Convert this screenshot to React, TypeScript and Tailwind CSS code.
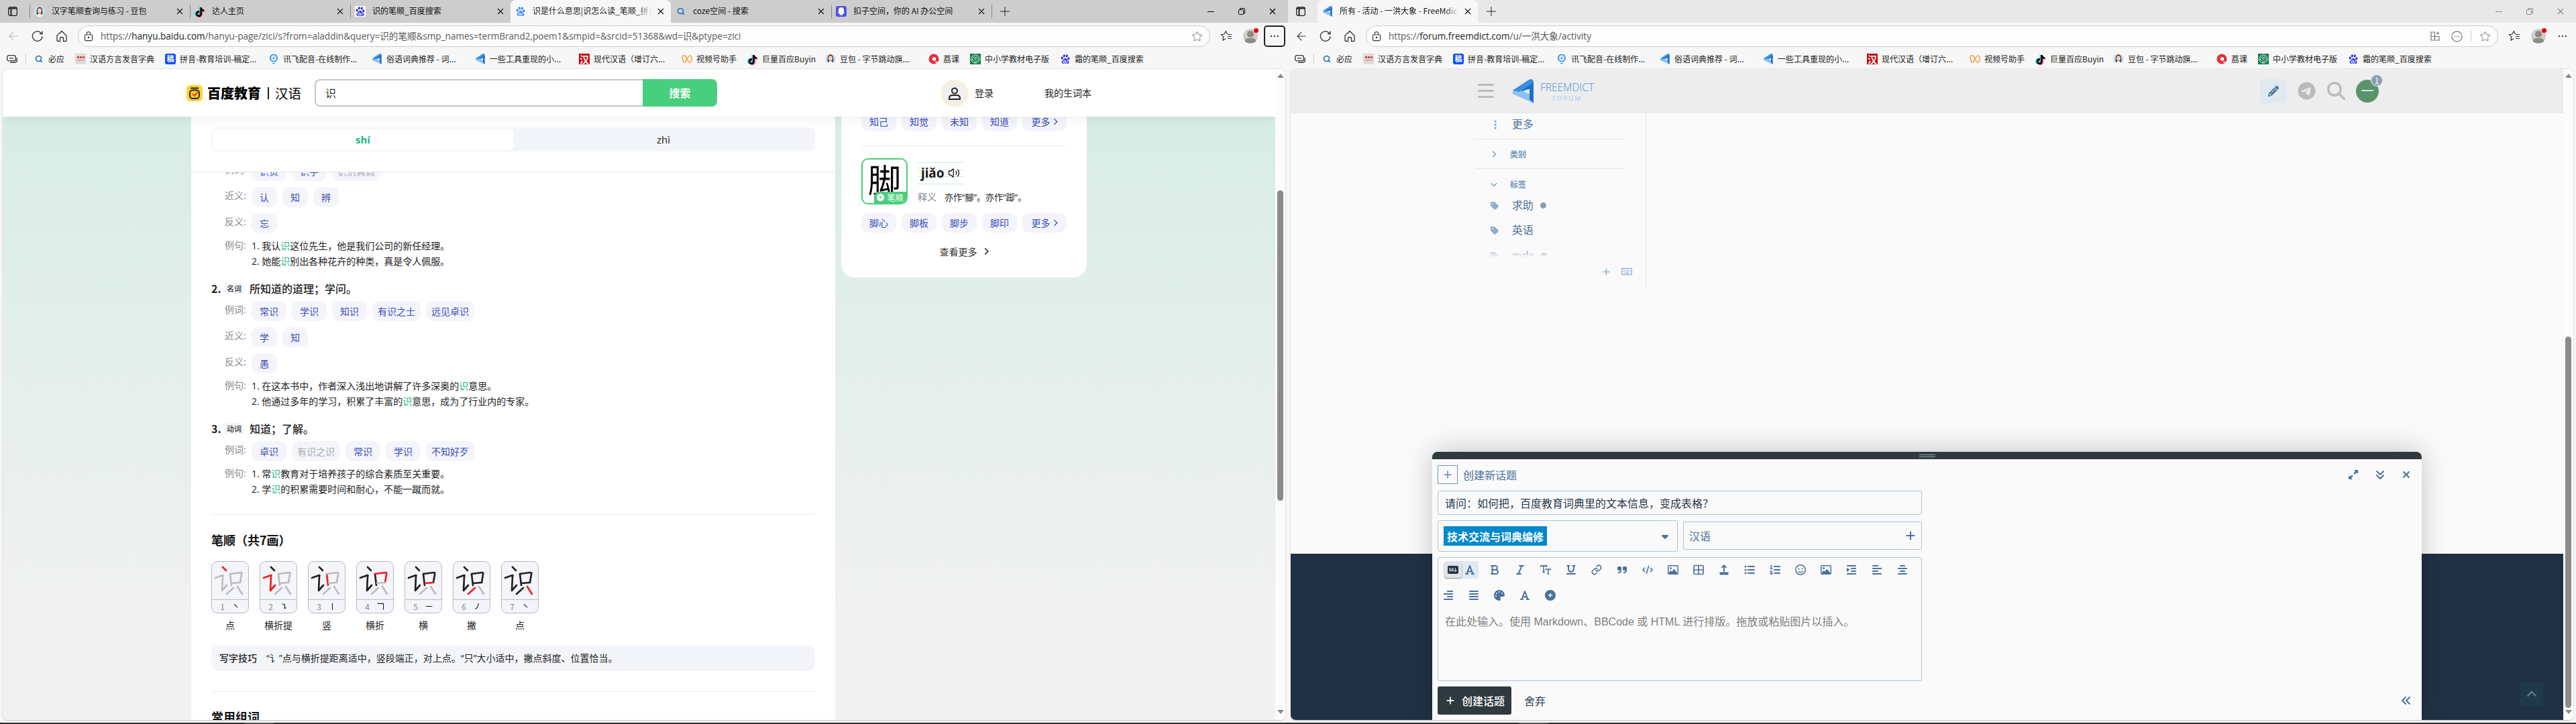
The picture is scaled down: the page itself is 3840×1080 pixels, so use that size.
import type { ReactNode } from 'react';
import {
  FaAlignCenter, FaAlignJustify, FaAlignLeft, FaAlignRight, FaAnglesDown, FaAnglesLeft, FaBold, FaCaretDown,
  FaChevronDown, FaChevronRight, FaCirclePlus, FaCode, FaEllipsisVertical, FaFont, FaIndent, FaItalic,
  FaListOl, FaListUl, FaMagnifyingGlass, FaPalette, FaPencil, FaPlus, FaQuoteRight, FaRegFaceSmile, FaRegImage,
  FaRegKeyboard, FaTag, FaTelegram, FaTiktok, FaUnderline,
  FaUpRightAndDownLeftFromCenter, FaXmark, FaChevronUp,
} from 'react-icons/fa6';
import { BsMarkdownFill } from 'react-icons/bs';
import { SiBaidu } from 'react-icons/si';
import { ArrowLeft, Link, Search, Star, Volume2 } from 'lucide-react';

/* ---------- small icons ---------- */

const Avatar = () => (
  <svg viewBox="0 0 16 16" className="size-4 shrink-0">
    <circle cx="8" cy="8" r="8" fill="#c5e4f7" />
    <path d="M4 13C3 6 4 1.500 8 1.500S13 6 12 13z" fill="#5a3a36" />
    <ellipse cx="8" cy="7" rx="2.900" ry="3.700" fill="#f8d3c3" />
    <path d="M4 15C4.500 12 6.500 11 8 11s3.500 1 4 4q-4 2-8 0z" fill="#fff" />
  </svg>
);

const Tiktok = () => (
  <span className="relative size-4 shrink-0">
    <FaTiktok className="absolute top-0.5 -left-px size-3.5 text-[#25d6e0]" />
    <FaTiktok className="absolute top-[3px] left-[2px] size-3.5 text-[#f0305a]" />
    <FaTiktok className="absolute top-0.5 left-px size-3.5 text-black" />
  </span>
);

const Paw = ({ light = false }: { light?: boolean }) => (
  <span className="flex size-4 shrink-0 items-center justify-center bg-white">
    <SiBaidu className={light ? 'size-3.5 text-[#3385ff]' : 'size-3.5 text-[#2a32d8]'} />
  </span>
);

const BlueSearch = () => <Search className="size-3 shrink-0 text-[#1a73c4]" strokeWidth={3.4} />;

const MdictMark = ({ className = 'h-4 w-4' }: { className?: string }) => (
  <svg viewBox="0 0 32 36" className={`shrink-0 ${className}`}>
    <path d="M0 17L26 0Q31 0 31 4V14L10 18z" fill="#3a8ee6" />
    <path d="M0 17L31 35V25L14 17z" fill="#8fc0f3" />
    <path d="M31 4V36L25 32V14L15 18 9 14z" fill="#1e6fc8" />
    <path d="M0 17L24 1 29 1 31 5 10 19z" fill="#3a8ee6" />
    <path d="M0 17v5L31 36l-6-6z" fill="#8fc0f3" />
  </svg>
);

const VoiceBook = () => (
  <span className="flex size-4 shrink-0 flex-col items-center justify-center gap-0.5 bg-[#dcdcdc]">
    <span className="flex gap-px">
      <i className="size-[3px] bg-[#d44]" />
      <i className="size-[3px] bg-[#d44]" />
      <i className="size-[3px] bg-[#d44]" />
    </span>
    <span className="h-0.5 w-3 bg-[#e9a5a5]" />
  </span>
);

const Gaoding = () => (
  <span className="flex size-4 shrink-0 items-center justify-center rounded-[3px] bg-[#0a4dff] text-[11px] leading-none font-bold text-white">稿</span>
);

const Xunfei = () => (
  <svg viewBox="0 0 16 16" className="size-4 shrink-0" fill="none">
    <circle cx="8" cy="6.500" r="5" stroke="#3f9bf5" strokeWidth="2.200" />
    <path d="M6 14.500h4M9 4.500 7 7h2.500" stroke="#3f9bf5" strokeWidth="1.500" />
  </svg>
);

const Han = () => (
  <span className="flex size-4 shrink-0 items-center justify-center bg-[#c4040a] text-[14px] leading-none font-bold text-white">汉</span>
);

const Channels = () => (
  <svg viewBox="0 0 16 16" className="size-4 shrink-0" fill="none" stroke="#f5a142" strokeWidth="1.500">
    <path d="M8 8C6 2 1 1 1.200 5S3 15 5 13s5-11 8-10 2 9 0 10-3-2-5-5z" />
  </svg>
);

const RedDot = () => (
  <svg viewBox="0 0 16 16" className="size-4 shrink-0">
    <circle cx="8" cy="8" r="7.500" fill="#e0303a" />
    <circle cx="8.500" cy="8" r="2.800" fill="#fff" />
    <path d="M10 12.500c2 0 4 0 4 2.500" stroke="#fff" strokeWidth="1.500" fill="none" />
  </svg>
);

const GreenBook = () => (
  <svg viewBox="0 0 16 16" className="size-4 shrink-0" fill="none" stroke="#fff">
    <rect width="16" height="16" fill="#0c7a4c" stroke="none" />
    <circle cx="8" cy="8" r="6.200" />
    <path d="M4 5l4 4 4-4M3 8l5 5 5-5M6 4l2 2 2-2" />
  </svg>
);

const CozeIcon = () => (
  <svg viewBox="0 0 16 16" className="size-4 shrink-0">
    <rect width="16" height="16" rx="3" fill="#4d53e8" />
    <path d="M8 2a4 4 0 014 4v3l1 1.500-2 .5-1 2.500H6L5 11l-2-.5L4 9V6a4 4 0 014-4z" fill="#fff" />
  </svg>
);

const Cross = ({ className = 'size-2.5' }: { className?: string }) => (
  <svg viewBox="0 0 10 10" className={`shrink-0 ${className}`} stroke="currentColor" strokeWidth="1.100">
    <path d="M1 1l8 8M9 1l-8 8" />
  </svg>
);

/* ---------- browser chrome ---------- */

interface Tab {
  title: string;
  icon: ReactNode;
  active?: boolean;
  separator?: boolean;
}

const bookmarks = [
  { label: '必应', icon: <BlueSearch />, width: 'w-[62px]' },
  { label: '汉语方言发音字典', icon: <VoiceBook />, width: 'w-[134px]' },
  { label: '拼音-教育培训-稿定...', icon: <Gaoding />, width: 'w-[154px]' },
  { label: '讯飞配音-在线制作...', icon: <Xunfei />, width: 'w-[154px]' },
  { label: '俗语词典推荐 - 词...', icon: <MdictMark />, width: 'w-[154px]' },
  { label: '一些工具重现的小...', icon: <MdictMark />, width: 'w-[155px]' },
  { label: '现代汉语（增订六...', icon: <Han />, width: 'w-[153px]' },
  { label: '视频号助手', icon: <Channels />, width: 'w-[98px]' },
  { label: '巨量百应Buyin', icon: <Tiktok />, width: 'w-[116px]' },
  { label: '豆包 - 字节跳动旗...', icon: <Avatar />, width: 'w-[154px]' },
  { label: '荔课', icon: <RedDot />, width: 'w-[62px]' },
  { label: '中小学教材电子版', icon: <GreenBook />, width: 'w-[134px]' },
  { label: '霜的笔顺_百度搜索', icon: <Paw />, width: 'w-[134px]' },
];

const TabStrip = ({ tabs, focused }: { tabs: Tab[]; focused: boolean }) => (
  <div className={`flex h-[34px] shrink-0 ${focused ? 'bg-[#cdcdcd]' : 'bg-[#e8e8e8]'}`}>
    <div className="flex w-11 items-center justify-center pr-1">
      <svg viewBox="0 0 14 14" className="mr-0.5 size-3.5" fill="none" stroke="#222" strokeWidth="1.300">
        <rect x="0.700" y="0.700" width="12.600" height="12.600" rx="2.500" />
        <path d="M1 2.500h12M4.500 3v10" strokeWidth="2" />
      </svg>
    </div>
    {tabs.map((tab) => (
      <div
        key={tab.title}
        className={`flex w-[239px] shrink-0 items-center pr-2.5 text-[12px] text-[#111] ${tab.active ? 'rounded-t-lg bg-[#f7f7f7]' : ''}`}
      >
        <span className={`h-5 w-px ${tab.separator ? 'bg-[#888]' : ''}`} />
        <span className="ml-[6px] flex w-4 justify-center">{tab.icon}</span>
        <span className={`ml-2.5 w-[178px] overflow-hidden pb-0.5 whitespace-nowrap ${tab.active ? 'mask-r-from-88% mask-r-to-100%' : ''}`}>{tab.title}</span>
        <span className="ml-2">
          <Cross />
        </span>
      </div>
    ))}
    <div className="flex items-center">
      <span className={`h-5 w-px ${focused ? 'bg-[#888]' : ''}`} />
      <svg viewBox="0 0 14 14" className="ml-3 size-3.5" stroke="#222">
        <path d="M7 0v14M0 7h14" />
      </svg>
    </div>
    <div className={`ml-auto flex items-center gap-9 pr-[18px] ${focused ? 'text-black' : 'text-[#888]'}`}>
      <span className="h-px w-2.5 bg-current" />
      <svg viewBox="0 0 10 10" className="size-2.5" fill="none" stroke="currentColor">
        <path d="M2.500 2V.5H8Q9.500.5 9.500 2v6H8" />
        <rect x="0.500" y="2.500" width="7" height="7" rx="1" />
      </svg>
      <Cross />
    </div>
  </div>
);

const Toolbar = ({ url, focused }: { url: ReactNode; focused: boolean }) => (
  <div className="flex h-10 shrink-0 items-center text-[#333]">
    <ArrowLeft className={`ml-2.5 size-[20px] ${focused ? 'text-[#b5b5b5]' : ''}`} strokeWidth={1.3} />
    <svg viewBox="0 0 18 18" className="ml-[17px] size-[18px]" fill="none" stroke="currentColor" strokeWidth="1.300">
      <path d="M16 9a7.300 7.300 0 11-2.500-5.500L16 5.500M16 1.500v4h-4" />
    </svg>
    <svg viewBox="0 0 18 18" className="ml-[18px] size-[18px]" fill="none" stroke="currentColor" strokeWidth="1.300">
      <path d="M2 8l7-6.500L16 8v7.500Q16 16.500 15 16.500h-3.500v-5Q11.500 10.500 9 10.500t-2.500 1v5H3Q2 16.500 2 15.500z" />
    </svg>
    <div className="ml-[15px] flex h-8 w-[1688px] items-center rounded-full border border-[#ccc] bg-[#fdfdfd] pr-[10px] pl-2">
      <svg viewBox="0 0 14 16" className="h-[15px] w-3.5" fill="none" stroke="currentColor" strokeWidth="1.200">
        <rect x="1" y="5" width="12" height="9.500" rx="2" />
        <path d="M4 5V3.500a3 3 0 016 0V5" />
        <circle cx="7" cy="9.500" r="0.800" fill="currentColor" />
      </svg>
      <span className="ml-[11px] font-['Open_Sans','Noto_Sans_CJK_SC',sans-serif] text-[13.55px] whitespace-nowrap text-[#5a5a5a]">{url}</span>
      <div className="ml-auto flex items-center text-[#777]">
        {!focused && (
          <>
            <svg viewBox="0 0 16 16" className="size-4" fill="none" stroke="currentColor" strokeWidth="1.200">
              <path d="M7.500 2H2v12h12V8.500H2M7.500 2v12M12 1v5M9.500 3.500h5" />
            </svg>
            <svg viewBox="0 0 16 16" className="ml-4 size-[17px]" fill="none" stroke="currentColor" strokeWidth="1.100">
              <circle cx="8" cy="8" r="7.200" />
              <path d="M4.500 8h1.200M7.400 8h1.200M10.300 8h1.200" strokeWidth="1.500" />
            </svg>
            <span className="mr-3 ml-3 h-4 w-px bg-[#ccc]" />
          </>
        )}
        <Star className="size-[17px]" strokeWidth={1.4} />
      </div>
    </div>
    <svg viewBox="0 0 18 18" className="ml-[15px] size-[18px]" fill="none" stroke="currentColor" strokeWidth="1.200">
      <path d="M10.500 6L8.200 1.500 6 6l-4.500.7 3.300 3.200L4 15l4-2.300M11 6.500h6M11 9.500h6M11 12.500h6" />
    </svg>
    <span className="relative ml-4 flex size-[22px] items-center justify-center rounded-full bg-[#d0cec8]">
      <svg viewBox="0 0 22 22" className="size-[22px]" fill="#8d8983">
        <circle cx="11" cy="8" r="5" />
        <path d="M3 19q0-5 5-5h6q5 0 5 5-8 5-16 0z" />
      </svg>
      <span className="absolute -top-px -right-px size-[7px] rounded-full bg-[#e60012]" />
    </span>
    <span
      className={`ml-[9px] flex h-8 w-8 items-center justify-center gap-[3px] rounded-[5px] ${focused ? 'border-2 border-[#222]' : ''}`}
    >
      <i className="size-0.5 bg-[#333]" />
      <i className="size-0.5 bg-[#333]" />
      <i className="size-0.5 bg-[#333]" />
    </span>
  </div>
);

const Bookmarks = () => (
  <div className="flex h-[29px] shrink-0 items-center pb-0.5 text-[12px] text-[#222]">
    <svg viewBox="0 0 16 12" className="ml-2.5 h-3 w-4" fill="none" stroke="#333" strokeWidth="1.300">
      <rect x="0.700" y="0.700" width="12.500" height="8" rx="2.500" />
      <path d="M4 4.700h6M15.200 4v4q0 3-3 3H5" />
    </svg>
    <span className="ml-3 h-4 w-px bg-[#ccc]" />
    <div className="ml-[11px] flex">
      {bookmarks.map((b) => (
        <div key={b.label} className={`flex shrink-0 items-center whitespace-nowrap ${b.width}`}>
          <span className="flex w-4 shrink-0 justify-center">{b.icon}</span>
          <span className="ml-1.5">{b.label}</span>
        </div>
      ))}
    </div>
  </div>
);

interface BrowserWindowProps {
  tabs: Tab[];
  url: ReactNode;
  focused?: boolean;
  scroll: ReactNode;
  children: ReactNode;
}

const BrowserWindow = ({ tabs, url, focused = false, scroll, children }: BrowserWindowProps) => (
  <div className="flex h-[1078px] w-[1920px] flex-col bg-[#f7f7f7]">
    <TabStrip tabs={tabs} focused={focused} />
    <Toolbar url={url} focused={focused} />
    <Bookmarks />
    <div className="mx-1 flex h-[972px] overflow-hidden rounded-lg border-b border-[#ccc] bg-white shadow-[0_0_2px_rgba(0,0,0,0.25)]">
      <div className="h-full w-[1897px] shrink-0 overflow-hidden">{children}</div>
      <div className="flex h-full flex-1 flex-col items-center bg-[#fcfcfc] pt-[7px]">
        <span className="size-0 border-x-[5px] border-b-[6px] border-x-transparent border-b-[#888]" />
        {scroll}
        <span className="mt-auto mb-[9px] size-0 border-x-[5px] border-t-[6px] border-x-transparent border-t-[#888]" />
      </div>
    </div>
  </div>
);

/* ---------- dictionary page ---------- */

const Chip = ({ text, muted = false }: { text: string; muted?: boolean }) => (
  <span
    className={`flex h-[30px] shrink-0 items-center rounded-[10px] bg-[#f4f5fa] text-[14px] whitespace-nowrap ${text.length > 3 ? 'px-2' : 'px-3'} ${muted ? 'text-[#a5a7ae]' : 'text-[#3a4cc0]'}`}
  >
    {text}
  </span>
);

const ChipRow = ({ label, words, muted = [] }: { label: string; words: string[]; muted?: string[] }) => (
  <div className="mb-[9px] flex h-[30px] gap-2 pl-5">
    <span className="w-8 shrink-0 font-['Open_Sans','Noto_Sans_CJK_SC',sans-serif] text-[14px] leading-[25px] text-[#868991]">{label}:</span>
    {words.map((w) => (
      <Chip key={w} text={w} muted={muted.includes(w)} />
    ))}
  </div>
);

// highlights the looked-up character inside an example sentence
const Sentence = ({ n, text }: { n: number; text: string }) => {
  const at = text.indexOf('识');
  return (
    <div className="h-[23px] leading-[23px]">
      {n}. {text.slice(0, at)}
      <span className="text-[#16b88f]">识</span>
      {text.slice(at + 1)}
    </div>
  );
};

const Examples = ({ items }: { items: string[] }) => (
  <div className="-mt-0.5 flex pl-5 font-['Open_Sans','Noto_Sans_CJK_SC',sans-serif] text-[14px] text-[#222]">
    <span className="w-10 shrink-0 leading-[21px] text-[#868991]">例句:</span>
    <div>
      {items.map((s, i) => (
        <Sentence key={s} n={i + 1} text={s} />
      ))}
    </div>
  </div>
);

const Meaning = ({ n, kind, text }: { n: number; kind: string; text: string }) => (
  <div className="mt-[17px] mb-[7px] flex h-6 items-center text-[16px] font-medium text-[#1f1f1f]">
    <span className="w-5 font-bold">{n}.</span>
    <span className="flex h-[17px] w-7 items-center justify-center rounded-[3px] bg-[#f4f5fa] text-[11px] text-[#333]">{kind}</span>
    <span className="ml-[9px] pb-px">{text}</span>
  </div>
);

const glyphStrokes = [
  'M17 4l5 5',
  'M6 20l11-4q1 0 0 2l-1 21 7-8',
  'M28 14l2 17',
  'M28 14l16-2q2 0 1 3l-2 12',
  'M31 28l12-1',
  'M33 35l-10 9',
  'M39 33l7 11',
];

const strokeMarks = ['M5 4l6 6', 'M4 4h5v8l3-2', 'M8 2v12', 'M2 3h11v11', 'M2 8h12', 'M10 2q0 8-6 11', 'M5 4l6 6'];
const strokeNames = ['点', '横折提', '竖', '横折', '横', '撇', '点'];

const StrokeCard = ({ index }: { index: number }) => (
  <div className="flex w-14 flex-col items-center">
    <div className="h-[78px] w-14 overflow-hidden rounded-[9px] border border-[#b7bac4] bg-[#f4f5fa]">
      <svg viewBox="0 0 54 56" className="h-[56px] w-[54px]" fill="none" strokeWidth="2.700" strokeLinecap="round" strokeLinejoin="round">
        <g transform="translate(-1 4)">
          {glyphStrokes.map((d, i) => (
            <path key={d} d={d} stroke={i < index ? '#222' : i === index ? '#f51c1c' : '#bdbdbd'} />
          ))}
        </g>
      </svg>
      <div className="flex h-5 items-center justify-center gap-2.5 border-t border-[#b7bac4] text-[12px] text-[#888]">
        {index + 1}
        <svg viewBox="0 0 16 16" className="size-[13px]" fill="none" stroke="#222" strokeWidth="1.400">
          <path d={strokeMarks[index]} />
        </svg>
      </div>
    </div>
    <span className="mt-1.5 mb-0.5 text-[14px] leading-[22px] whitespace-nowrap text-[#1f1f1f]">{strokeNames[index]}</span>
  </div>
);

const MoreChip = () => (
  <span className="flex h-[30px] w-[66px] shrink-0 items-center justify-center gap-1 rounded-[10px] bg-[#f4f5fa] text-[14px] text-[#3a4cc0]">
    更多
    <svg viewBox="0 0 6 10" className="h-[11px] w-[7px]" fill="none" stroke="currentColor" strokeWidth="1.200">
      <path d="M1 1l4 4-4 4" />
    </svg>
  </span>
);

const HanyuHeader = () => (
  <div className="relative z-10 flex h-[71px] items-center bg-white pl-[274px] shadow-[0_6px_14px_rgba(0,0,0,0.05)]">
    <svg viewBox="0 0 24 24" className="size-6" fill="none">
      <rect width="24" height="24" rx="6" fill="#ffd32e" />
      <rect x="5" y="7.500" width="14" height="12.500" rx="4.500" stroke="#222" strokeWidth="2" />
      <path d="M6 4.500h12" stroke="#222" strokeWidth="1.800" />
      <path d="M9 13l3 3 4.500-5.500" stroke="#f0401c" strokeWidth="2.200" />
    </svg>
    <span className="ml-[7px] text-[20px] font-black text-black">百度教育</span>
    <span className="ml-[10px] h-[18px] w-0.5 bg-[#222]" />
    <span className="ml-[9px] text-[19.5px] text-black">汉语</span>
    <div className="ml-5 flex h-[41px] w-[600px]">
      <div className="flex flex-1 items-center rounded-l-lg border-2 border-r-0 border-[#c4c7ce] pb-0.5 pl-3.5 text-[16px] text-[#333]">识</div>
      <div className="flex w-[111px] items-center justify-center rounded-r-lg bg-[#48cf7d] pb-px text-[16px] font-bold text-white">搜索</div>
    </div>
    <span className="ml-[334px] flex size-10 items-center justify-center rounded-full border-2 border-[#fbf0c4] bg-[#f0f0f0]">
      <svg viewBox="0 0 20 20" className="mt-0.5 size-5" fill="none" stroke="#222" strokeWidth="2">
        <circle cx="10" cy="5.500" r="4" />
        <path d="M2 18v-1.500Q2 12 7 12h6q5 0 5 4.500V18z" />
      </svg>
    </span>
    <span className="ml-2.5 text-[14px] text-[#222]">登录</span>
    <span className="ml-[76px] pb-px text-[14px] text-[#222]">我的生词本</span>
  </div>
);

const HanyuPage = () => (
  <div className="flex h-full flex-col bg-linear-to-b from-[#d5ece5] to-[#f1f1f1] to-85%">
    <HanyuHeader />
    <div className="flex flex-1 items-start overflow-hidden pl-[281px]">
      <div className="flex h-full w-[960px] flex-col bg-white">
        <div className="h-[83px] shrink-0 border-b border-[#e6e7ea] px-[30px] pt-4">
          <div className="flex h-9 rounded-lg bg-[#f4f5fa] p-0.5 text-[16px]">
            <span className="flex flex-1 items-center justify-center rounded-md bg-white font-['Open_Sans',sans-serif] text-[15px] font-bold text-[#14b68c]">shí</span>
            <span className="flex flex-1 items-center justify-center font-['Open_Sans',sans-serif] text-[15px] text-[#222]">zhì</span>
          </div>
        </div>
        <div className="min-h-0 flex-1 overflow-hidden px-[30px]">
          <div className="-mt-[17px]">
            <ChipRow label="例词" words={['识货', '识字', '识别真假']} muted={['识别真假']} />
            <ChipRow label="近义" words={['认', '知', '辨']} />
            <ChipRow label="反义" words={['忘']} />
            <Examples items={['我认识这位先生，他是我们公司的新任经理。', '她能识别出各种花卉的种类，真是令人佩服。']} />
            <Meaning n={2} kind="名词" text="所知道的道理；学问。" />
            <ChipRow label="例词" words={['常识', '学识', '知识', '有识之士', '远见卓识']} />
            <ChipRow label="近义" words={['学', '知']} />
            <ChipRow label="反义" words={['愚']} />
            <Examples
              items={['在这本书中，作者深入浅出地讲解了许多深奥的识意思。', '他通过多年的学习，积累了丰富的识意思，成为了行业内的专家。']}
            />
            <Meaning n={3} kind="动词" text="知道；了解。" />
            <ChipRow label="例词" words={['卓识', '有识之识', '常识', '学识', '不知好歹']} muted={['有识之识']} />
            <Examples items={['常识教育对于培养孩子的综合素质至关重要。', '学识的积累需要时间和耐心，不能一蹴而就。']} />
          </div>
          <div className="mt-[26px] border-t border-[#ececef] pt-[25px]">
            <h2 className="h-6 text-[18px] leading-6 font-bold text-[#111]">笔顺（共7画）</h2>
            <div className="mt-5 flex gap-4">
              {strokeNames.map((_, i) => (
                <StrokeCard key={i} index={i} />
              ))}
            </div>
            <div className="mt-[18px] flex h-[38px] items-center rounded-[10px] bg-[#f4f5fa] px-3 pb-px text-[14px] text-[#222]">
              <span className="font-medium">写字技巧</span>
              <span className="ml-3.5 font-['Open_Sans','Noto_Sans_CJK_SC',sans-serif]">
                “讠”点与横折提距离适中，竖段端正，对上点。“只”大小适中，撇点斜度、位置恰当。
              </span>
            </div>
          </div>
          <div className="mt-[30px] border-t border-[#ececef] pt-[25px]">
            <h2 className="h-6 text-[18px] leading-6 font-bold text-[#111]">常用组词</h2>
          </div>
        </div>
      </div>
      <div className="ml-[9px] h-60 w-[366px] rounded-b-[20px] bg-white px-[30px]">
        <div className="-mt-2 flex gap-2">
          {['知己', '知觉', '未知', '知道'].map((w) => (
            <Chip key={w} text={w} />
          ))}
          <MoreChip />
        </div>
        <div className="mt-[21px] h-px bg-[#ececef]" />
        <div className="mt-[18px] flex">
          <div className="relative h-[69px] w-[69px] shrink-0 overflow-hidden rounded-[10px] border-2 border-[#4bcd7c] bg-white">
            <span className="absolute top-[32px] left-1 w-[57px] border-t border-dashed border-[#e8e8e8]" />
            <span className="absolute top-1 left-[32px] h-[57px] border-l border-dashed border-[#e8e8e8]" />
            <span className="relative block pl-[8px] text-[49px] leading-[56px] text-black">脚</span>
            <span className="absolute right-0 bottom-0 flex h-[17px] w-12 items-center justify-center gap-1 rounded-tl-lg bg-[#4bcd7c] text-[12px] text-white">
              <svg viewBox="0 0 10 10" className="size-[11px]">
                <circle cx="5" cy="5" r="5" fill="#fff" />
                <path d="M4 3l3 2-3 2z" fill="#4bcd7c" />
              </svg>
              笔顺
            </span>
          </div>
          <div className="ml-[15px]">
            <div className="relative mt-1.5 h-[33px] w-[69px]">
              <div className="absolute inset-0 flex flex-col justify-between">
                <i className="h-px bg-[#c5efd7]" />
                <i className="h-px bg-[#c5efd7]" />
                <i className="h-px bg-[#c5efd7]" />
                <i className="h-px bg-[#c5efd7]" />
              </div>
              <div className="relative flex h-8 items-center pl-[5px] text-[#1a1a1a]">
                <span className="w-10 font-['Noto_Sans',sans-serif] text-[19px] leading-8 font-bold">jiǎo</span>
                <Volume2 className="size-[18px]" strokeWidth={1.8} />
              </div>
            </div>
            <div className="mt-[7px] text-[14px] leading-[22px] whitespace-nowrap text-[#868991]">
              释义
              <span className="ml-3 font-['Open_Sans','Noto_Sans_CJK_SC',sans-serif] text-[13px] text-[#1a1a1a]">亦作“腳”。亦作“踋”。</span>
            </div>
          </div>
        </div>
        <div className="mt-3 flex gap-2">
          {['脚心', '脚板', '脚步', '脚印'].map((w) => (
            <Chip key={w} text={w} />
          ))}
          <MoreChip />
        </div>
        <div className="mt-[17px] flex items-center justify-center gap-2.5 text-[14px] leading-[22px] text-[#333]">
          查看更多
          <svg viewBox="0 0 6 10" className="h-3 w-[7px]" fill="none" stroke="currentColor" strokeWidth="1.400">
            <path d="M1 1l4 4-4 4" />
          </svg>
        </div>
      </div>
    </div>
  </div>
);

/* ---------- forum page ---------- */

const ForumHeader = () => (
  <div className="flex h-[66px] shrink-0 items-center border-b border-[#dfe8f0] bg-[#ededed] pl-[279px]">
    <div className="flex flex-col gap-1.5">
      <i className="h-[3px] w-6 rounded bg-[#bbb]" />
      <i className="h-[3px] w-6 rounded bg-[#bbb]" />
      <i className="h-[3px] w-6 rounded bg-[#bbb]" />
    </div>
    <MdictMark className="ml-7 h-9 w-8" />
    <div className="mt-1 ml-[6px] flex w-[86px] flex-col items-center font-['Open_Sans',sans-serif] font-light">
      <span className="text-[15.5px] leading-[18px] text-[#4a90dc]">FREEMDICT</span>
      <span className="text-[9.5px] leading-[16px] font-normal tracking-[2px] text-[#a5cbf2]">FORUM</span>
    </div>
    <span className="ml-[990px] flex h-9 w-[39px] items-center justify-center rounded-sm bg-[#dfe9f2]">
      <FaPencil className="size-4 text-[#4a729c]" />
    </span>
    <FaTelegram className="ml-[17px] size-[27px] text-[#bbb]" />
    <FaMagnifyingGlass className="ml-[17px] size-[27px] text-[#bbb]" />
    <span className="relative ml-[16px] flex size-[34px] items-center justify-center rounded-full bg-[#5a946c] text-[19px] text-white">
      一
      <span className="absolute -top-2 -right-1.5 flex h-[18px] w-[18px] items-center justify-center rounded-full border border-[#ededed] bg-[#8a9fae] text-[12px] leading-none">
        1
      </span>
    </span>
  </div>
);

const SideLink = ({ label, dot = false }: { label: string; dot?: boolean }) => (
  <div className="flex h-[37.500px] items-center">
    <FaTag className="mt-1 ml-[27px] size-3.5 shrink-0 text-[#90aecb]" />
    <span className="ml-[19px] text-[16px] text-[#4a709b]">{label}</span>
    {dot && <span className="mt-1 ml-2.5 size-[9px] rounded-full bg-[#8a9ea8]" />}
  </div>
);

const ForumSidebar = () => (
  <div className="h-[257px] w-[256px] border-r border-[#dfe8f0]">
    <div className="flex h-[39px] w-[224px] items-center border-b border-[#dfe8f0] pb-2">
      <FaEllipsisVertical className="mt-1 ml-[23px] size-4 text-[#90aecb]" />
      <span className="ml-[17px] text-[16px] text-[#4a709b]">更多</span>
    </div>
    <div className="flex h-11 w-[224px] items-center border-b border-[#dfe8f0] text-[12px] font-bold text-[#6f96bf]">
      <FaChevronRight className="mr-[19px] ml-6 size-2.5" />
      类别
    </div>
    <div className="flex h-[45px] w-[224px] items-center text-[12px] font-bold text-[#6f96bf]">
      <FaChevronDown className="mr-[19px] ml-6 size-2.5" />
      标签
    </div>
    <div className="-mt-[11px] -ml-1 h-[98px] overflow-hidden mask-b-from-85% mask-b-to-100%">
      <SideLink label="求助" dot />
      <SideLink label="英语" />
      <SideLink label="mdx" dot />
    </div>
    <div className="mt-[13px] flex items-center justify-end gap-4 pr-5 text-[#90aecb]">
      <FaPlus className="size-[13px]" />
      <FaRegKeyboard className="size-4" />
    </div>
  </div>
);

const HeadingIcon = () => (
  <svg viewBox="0 0 16 16" className="size-4" fill="none" stroke="currentColor" strokeWidth="1.700">
    <path d="M1 4V1.800h8.500V4M5.200 2v9.500M3.200 11.500h4M8.500 8.500V7H15v1.500M11.800 7v7M10.300 14h3" />
  </svg>
);

const TableIcon = () => (
  <svg viewBox="0 0 16 16" className="size-4" fill="none" stroke="currentColor" strokeWidth="1.700">
    <rect x="1" y="1.500" width="14" height="13" rx="1.500" />
    <path d="M8 1.500v13M1 8h14" />
  </svg>
);

const UploadIcon = () => (
  <svg viewBox="0 0 16 16" className="size-4" fill="none" stroke="currentColor" strokeWidth="1.900">
    <path d="M8 11.500V1.500M4.500 4.800L8 1.300l3.500 3.500" />
    <path d="M1.500 13.500h13" strokeWidth="4" strokeLinejoin="round" />
  </svg>
);

const LinkIcon = () => <Link className="size-4" strokeWidth={2.3} />;

const toolIcons = [
  FaBold, FaItalic, HeadingIcon, FaUnderline, LinkIcon, FaQuoteRight, FaCode, FaRegImage, TableIcon, UploadIcon,
  FaListUl, FaListOl, FaRegFaceSmile, FaRegImage, FaIndent, FaAlignLeft, FaAlignCenter,
];

const toolIconsMore = [FaAlignRight, FaAlignJustify, FaPalette, FaFont, FaCirclePlus];

const Composer = () => (
  <div className="absolute top-[571px] left-[211px] flex h-[400px] w-[1475px] flex-col rounded-t-lg bg-[#fafafa] shadow-[0_-1px_40px_rgba(0,0,0,0.22)]">
    <div className="flex h-[11px] shrink-0 flex-col items-center justify-center gap-0.5 rounded-t-lg bg-[#2f3a40]">
      <i className="h-px w-6 bg-[#8ba5b5]" />
      <i className="h-px w-6 bg-[#8ba5b5]" />
    </div>
    <div className="flex flex-1 flex-col px-2 pt-[9px]">
      <div className="flex h-7 items-center text-[#4a719c]">
        <span className="flex h-7 w-[30px] items-center justify-center border border-[#6f95bd] text-[#6f95bd]">
          <FaPlus className="size-3.5" />
        </span>
        <span className="ml-2 text-[16px]">创建新话题</span>
        <FaUpRightAndDownLeftFromCenter className="ml-auto size-3.5" />
        <FaAnglesDown className="ml-[25px] size-4" />
        <FaXmark className="mr-[7px] ml-[23px] size-4" />
      </div>
      <div className="mt-2.5 flex h-9 w-[722px] items-center rounded-[3px] border border-[#adc3d9] px-2.5 text-[16px] text-[#26384a]">
        请问：如何把，百度教育词典里的文本信息，变成表格？
      </div>
      <div className="mt-2 flex h-[47px] w-[722px] gap-2">
        <div className="flex flex-1 items-center justify-between rounded-[3px] border border-[#adc3d9] pr-2.5 pl-2">
          <span className="flex h-[29px] items-center bg-[#0088cc] px-[5px] text-[16px] font-bold text-white">技术交流与词典编修</span>
          <FaCaretDown className="size-4 text-[#4a719c]" />
        </div>
        <div className="mt-0.5 flex h-[42px] flex-1 items-center justify-between rounded-[3px] border border-[#adc3d9] pr-2 pl-2 text-[#4a719c]">
          <span className="text-[16px]">汉语</span>
          <FaPlus className="size-4" />
        </div>
      </div>
      <div className="mt-2 h-[185px] w-[722px] rounded-[3px] border border-[#adc3d9] pt-[5px] text-[#4a719c]">
        <div className="flex h-[26px] items-center pl-[9px]">
          <span className="flex h-[26px] w-[51px] items-center rounded bg-[#dfe9f2]">
            <span className="flex h-6 w-[26px] items-center justify-center rounded bg-[#dfe3e7] shadow-[0_1px_2px_rgba(0,0,0,0.4)]">
              <BsMarkdownFill className="size-4 text-[#243242]" />
            </span>
            <FaFont className="ml-1 size-4" />
          </span>
          <span className="w-[5px]" />
          {toolIcons.map((Icon, i) => (
            <span key={i} className="flex w-[38px] shrink-0 justify-center">
              <Icon className="size-4" />
            </span>
          ))}
        </div>
        <div className="mt-3 -ml-[4px] flex h-[26px] items-center">
          {toolIconsMore.map((Icon, i) => (
            <span key={i} className="flex w-[38px] shrink-0 justify-center">
              <Icon className="size-4" />
            </span>
          ))}
        </div>
        <div className="mt-[15px] pl-2.5 font-['Liberation_Sans','Noto_Sans_CJK_SC',sans-serif] text-[16px] leading-6 text-[#808080]">
          在此处输入。使用 Markdown、BBCode 或 HTML 进行排版。拖放或粘贴图片以插入。
        </div>
      </div>
      <div className="mt-2 flex h-[42px] items-center text-[16px]">
        <span className="flex h-[42px] w-[110px] items-center rounded-[3px] bg-[#2f3a40] pl-3 font-medium text-white">
          <FaPlus className="mr-2.5 size-3.5" />
          创建话题
        </span>
        <span className="ml-[19px] text-[#26384a]">舍弃</span>
        <FaAnglesLeft className="mr-[7px] ml-auto size-4 text-[#4a719c]" />
      </div>
    </div>
  </div>
);

const ForumPage = () => (
  <div className="relative flex h-full flex-col bg-[#fafafa]">
    <ForumHeader />
    <div className="h-[657px] shrink-0 pl-[274px]">
      <ForumSidebar />
    </div>
    <div className="flex flex-1 items-end justify-end bg-[#213144] pr-[30px] pb-5">
      <span className="flex h-9 w-[35px] items-center justify-center bg-[#20394a] text-[#6d7b88]">
        <FaChevronUp className="size-4" />
      </span>
    </div>
    <Composer />
  </div>
);

/* ---------- desktop ---------- */

const hanyuTabs: Tab[] = [
  { title: '汉字笔顺查询与练习 - 豆包', icon: <Avatar />, separator: true },
  { title: '达人主页', icon: <Tiktok />, separator: true },
  { title: '识的笔顺_百度搜索', icon: <Paw />, separator: true },
  { title: '识是什么意思|识怎么读_笔顺_拼音', icon: <Paw light />, active: true },
  { title: 'coze空间 - 搜索', icon: <BlueSearch /> },
  { title: '扣子空间，你的 AI 办公空间', icon: <CozeIcon />, separator: true },
];

const forumTabs: Tab[] = [{ title: '所有 - 活动 - 一洪大象 - FreeMdict', icon: <MdictMark />, active: true }];

const App = () => (
  <div className="h-[1080px] w-[3840px] overflow-hidden bg-[#2e2e2e] font-['Noto_Sans_CJK_SC',sans-serif]">
    <div className="flex">
      <BrowserWindow
        focused
        tabs={hanyuTabs}
        url={
          <>
            https://<span className="text-[#222]">hanyu.baidu.com</span>
            /hanyu-page/zici/s?from=aladdin&amp;query=识的笔顺&amp;smp_names=termBrand2,poem1&amp;smpid=&amp;srcid=51368&amp;wd=识&amp;ptype=zici
          </>
        }
        scroll={<span className="mt-[168px] h-[463px] w-[9px] rounded-full bg-[#8b8b8b]" />}
      >
        <HanyuPage />
      </BrowserWindow>
      <BrowserWindow
        tabs={forumTabs}
        url={
          <>
            https://<span className="text-[#222]">forum.freemdict.com</span>/u/一洪大象/activity
          </>
        }
        scroll={<span className="mt-[386px] h-[554px] w-[9px] rounded-full bg-[#8b8b8b]" />}
      >
        <ForumPage />
      </BrowserWindow>
    </div>
    <div className="flex h-0.5">
      <span className="ml-[364px] w-[44px] bg-[#555]" />
      <span className="ml-[1856px] w-[44px] bg-[#555]" />
    </div>
  </div>
);

export default App;
